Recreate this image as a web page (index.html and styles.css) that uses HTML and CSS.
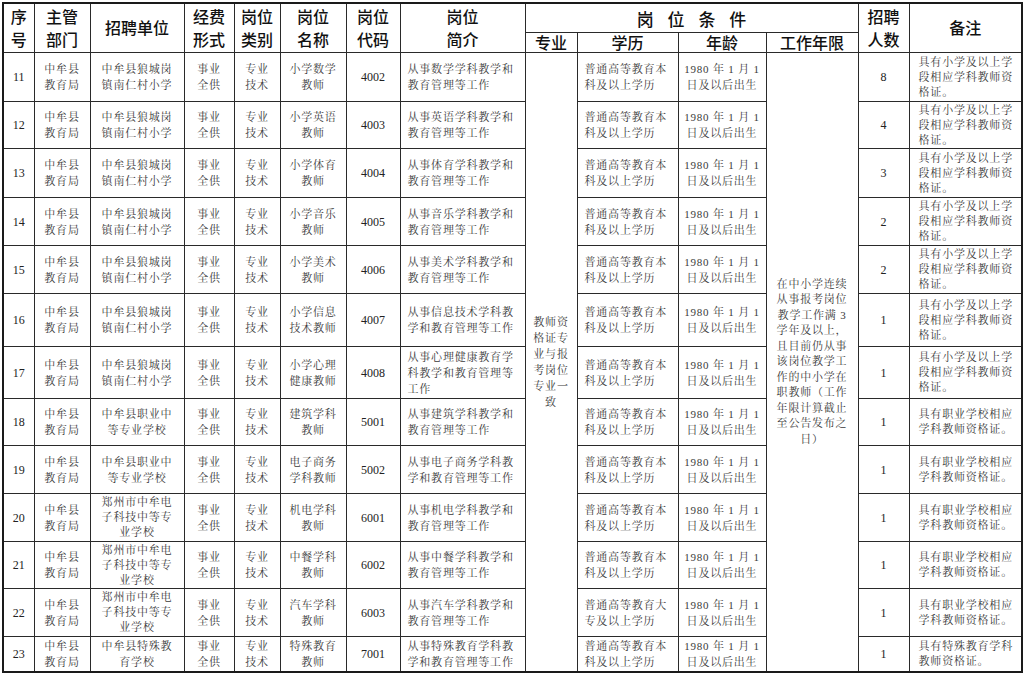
FILE: index.html
```html
<!DOCTYPE html>
<html lang="zh-CN">
<head>
<meta charset="utf-8">
<title>招聘岗位表</title>
<link rel="stylesheet" href="styles.css">
</head>
<body>
<div class="page">
<table class="jobs">
<colgroup>
<col class="c-no"><col class="c-dept"><col class="c-unit"><col class="c-fund"><col class="c-type"><col class="c-name"><col class="c-code"><col class="c-desc"><col class="c-major"><col class="c-edu"><col class="c-age"><col class="c-years"><col class="c-count"><col class="c-note">
</colgroup>
<thead>
<tr class="h1">
<th rowspan="2">序<br>号</th>
<th rowspan="2">主管<br>部门</th>
<th rowspan="2">招聘单位</th>
<th rowspan="2">经费<br>形式</th>
<th rowspan="2">岗位<br>类别</th>
<th rowspan="2">岗位<br>名称</th>
<th rowspan="2">岗位<br>代码</th>
<th rowspan="2">岗位<br>简介</th>
<th colspan="4" class="cond">岗 位 条 件</th>
<th rowspan="2">招聘<br>人数</th>
<th rowspan="2">备注</th>
</tr>
<tr class="h2">
<th>专业</th>
<th>学历</th>
<th>年龄</th>
<th>工作年限</th>
</tr>
</thead>
<tbody>
<tr class="r49">
<td class="num">11</td><td>中牟县<br>教育局</td><td>中牟县狼城岗<br>镇南仁村小学</td><td>事业<br>全供</td><td>专业<br>技术</td><td>小学数学<br>教师</td><td class="num">4002</td>
<td class="left">从事数学学科教学和<br>教育管理等工作</td>
<td rowspan="13" class="major">教师资<br>格证专<br>业与报<br>考岗位<br>专业一<br>致</td>
<td class="left">普通高等教育本<br>科及以上学历</td><td>1980 年 1 月 1<br>日及以后出生</td>
<td rowspan="13" class="years">在中小学连续<br>从事报考岗位<br>教学工作满 3<br>学年及以上，<br>且目前仍从事<br>该岗位教学工<br>作的中小学在<br>职教师（工作<br>年限计算截止<br>至公告发布之<br>日）</td>
<td class="num">8</td><td class="note">具有小学及以上学<br>段相应学科教师资<br>格证。</td>
</tr>
<tr class="r47">
<td class="num">12</td><td>中牟县<br>教育局</td><td>中牟县狼城岗<br>镇南仁村小学</td><td>事业<br>全供</td><td>专业<br>技术</td><td>小学英语<br>教师</td><td class="num">4003</td>
<td class="left">从事英语学科教学和<br>教育管理等工作</td>
<td class="left">普通高等教育本<br>科及以上学历</td><td>1980 年 1 月 1<br>日及以后出生</td>
<td class="num">4</td><td class="note">具有小学及以上学<br>段相应学科教师资<br>格证。</td>
</tr>
<tr class="r49">
<td class="num">13</td><td>中牟县<br>教育局</td><td>中牟县狼城岗<br>镇南仁村小学</td><td>事业<br>全供</td><td>专业<br>技术</td><td>小学体育<br>教师</td><td class="num">4004</td>
<td class="left">从事体育学科教学和<br>教育管理等工作</td>
<td class="left">普通高等教育本<br>科及以上学历</td><td>1980 年 1 月 1<br>日及以后出生</td>
<td class="num">3</td><td class="note">具有小学及以上学<br>段相应学科教师资<br>格证。</td>
</tr>
<tr class="r48">
<td class="num">14</td><td>中牟县<br>教育局</td><td>中牟县狼城岗<br>镇南仁村小学</td><td>事业<br>全供</td><td>专业<br>技术</td><td>小学音乐<br>教师</td><td class="num">4005</td>
<td class="left">从事音乐学科教学和<br>教育管理等工作</td>
<td class="left">普通高等教育本<br>科及以上学历</td><td>1980 年 1 月 1<br>日及以后出生</td>
<td class="num">2</td><td class="note">具有小学及以上学<br>段相应学科教师资<br>格证。</td>
</tr>
<tr class="r48">
<td class="num">15</td><td>中牟县<br>教育局</td><td>中牟县狼城岗<br>镇南仁村小学</td><td>事业<br>全供</td><td>专业<br>技术</td><td>小学美术<br>教师</td><td class="num">4006</td>
<td class="left">从事美术学科教学和<br>教育管理等工作</td>
<td class="left">普通高等教育本<br>科及以上学历</td><td>1980 年 1 月 1<br>日及以后出生</td>
<td class="num">2</td><td class="note">具有小学及以上学<br>段相应学科教师资<br>格证。</td>
</tr>
<tr class="r53">
<td class="num">16</td><td>中牟县<br>教育局</td><td>中牟县狼城岗<br>镇南仁村小学</td><td>事业<br>全供</td><td>专业<br>技术</td><td>小学信息<br>技术教师</td><td class="num">4007</td>
<td class="left">从事信息技术学科教<br>学和教育管理等工作</td>
<td class="left">普通高等教育本<br>科及以上学历</td><td>1980 年 1 月 1<br>日及以后出生</td>
<td class="num">1</td><td class="note">具有小学及以上学<br>段相应学科教师资<br>格证。</td>
</tr>
<tr class="r52">
<td class="num">17</td><td>中牟县<br>教育局</td><td>中牟县狼城岗<br>镇南仁村小学</td><td>事业<br>全供</td><td>专业<br>技术</td><td>小学心理<br>健康教师</td><td class="num">4008</td>
<td class="left">从事心理健康教育学<br>科教学和教育管理等<br>工作</td>
<td class="left">普通高等教育本<br>科及以上学历</td><td>1980 年 1 月 1<br>日及以后出生</td>
<td class="num">1</td><td class="note">具有小学及以上学<br>段相应学科教师资<br>格证。</td>
</tr>
<tr class="r47">
<td class="num">18</td><td>中牟县<br>教育局</td><td>中牟县职业中<br>等专业学校</td><td>事业<br>全供</td><td>专业<br>技术</td><td>建筑学科<br>教师</td><td class="num">5001</td>
<td class="left">从事建筑学科教学和<br>教育管理等工作</td>
<td class="left">普通高等教育本<br>科及以上学历</td><td>1980 年 1 月 1<br>日及以后出生</td>
<td class="num">1</td><td class="note">具有职业学校相应<br>学科教师资格证。</td>
</tr>
<tr class="r48">
<td class="num">19</td><td>中牟县<br>教育局</td><td>中牟县职业中<br>等专业学校</td><td>事业<br>全供</td><td>专业<br>技术</td><td>电子商务<br>学科教师</td><td class="num">5002</td>
<td class="left">从事电子商务学科教<br>学和教育管理等工作</td>
<td class="left">普通高等教育本<br>科及以上学历</td><td>1980 年 1 月 1<br>日及以后出生</td>
<td class="num">1</td><td class="note">具有职业学校相应<br>学科教师资格证。</td>
</tr>
<tr class="r48">
<td class="num">20</td><td>中牟县<br>教育局</td><td class="tight">郑州市中牟电<br>子科技中等专<br>业学校</td><td>事业<br>全供</td><td>专业<br>技术</td><td>机电学科<br>教师</td><td class="num">6001</td>
<td class="left">从事机电学科教学和<br>教育管理等工作</td>
<td class="left">普通高等教育本<br>科及以上学历</td><td>1980 年 1 月 1<br>日及以后出生</td>
<td class="num">1</td><td class="note">具有职业学校相应<br>学科教师资格证。</td>
</tr>
<tr class="r47">
<td class="num">21</td><td>中牟县<br>教育局</td><td class="tight">郑州市中牟电<br>子科技中等专<br>业学校</td><td>事业<br>全供</td><td>专业<br>技术</td><td>中餐学科<br>教师</td><td class="num">6002</td>
<td class="left">从事中餐学科教学和<br>教育管理等工作</td>
<td class="left">普通高等教育本<br>科及以上学历</td><td>1980 年 1 月 1<br>日及以后出生</td>
<td class="num">1</td><td class="note">具有职业学校相应<br>学科教师资格证。</td>
</tr>
<tr class="r48">
<td class="num">22</td><td>中牟县<br>教育局</td><td class="tight">郑州市中牟电<br>子科技中等专<br>业学校</td><td>事业<br>全供</td><td>专业<br>技术</td><td>汽车学科<br>教师</td><td class="num">6003</td>
<td class="left">从事汽车学科教学和<br>教育管理等工作</td>
<td class="left">普通高等教育大<br>专及以上学历</td><td>1980 年 1 月 1<br>日及以后出生</td>
<td class="num">1</td><td class="note">具有职业学校相应<br>学科教师资格证。</td>
</tr>
<tr class="r35">
<td class="num">23</td><td>中牟县<br>教育局</td><td>中牟县特殊教<br>育学校</td><td>事业<br>全供</td><td>专业<br>技术</td><td>特殊教育<br>教师</td><td class="num">7001</td>
<td class="left">从事特殊教育学科教<br>学和教育管理等工作</td>
<td class="left">普通高等教育本<br>科及以上学历</td><td>1980 年 1 月 1<br>日及以后出生</td>
<td class="num">1</td><td class="note">具有特殊教育学科<br>教师资格证。</td>
</tr>
</tbody>
</table>
</div>
</body>
</html>
```

FILE: styles.css
```css
html, body {
  margin: 0;
  padding: 0;
  background: #ffffff;
}

.page {
  padding: 2px 0 0 2px;
}

.jobs {
  border-collapse: collapse;
  table-layout: fixed;
  width: 1019px;
  border: 2px solid #1a1a1a;
  font-family: "Liberation Serif", "Noto Serif CJK SC", "Noto Sans CJK SC", serif;
  color: #3a3a3a;
}

.c-no { width: 31px; }
.c-dept { width: 56px; }
.c-unit { width: 94px; }
.c-fund { width: 50px; }
.c-type { width: 46px; }
.c-name { width: 66px; }
.c-code { width: 54px; }
.c-desc { width: 125px; }
.c-major { width: 52px; }
.c-edu { width: 101px; }
.c-age { width: 88px; }
.c-years { width: 92px; }
.c-count { width: 51px; }
.c-note { width: 113px; }

.jobs th {
  border: 1px solid #2a2a2a;
  font-family: "Noto Sans CJK SC", sans-serif;
  font-weight: 500;
  font-size: 16px;
  line-height: 23.5px;
  color: #111;
  padding: 0;
  text-align: center;
  vertical-align: middle;
}

.jobs .h1 th { height: 28px; }
.jobs .h2 th { height: 19px; line-height: 19px; }
.jobs th.cond { font-size: 17px; letter-spacing: 5px; padding-left: 5px; line-height: 25px; }

.jobs td {
  border: 1px solid #2a2a2a;
  font-size: 11px;
  letter-spacing: 0.8px;
  line-height: 16px;
  padding: 0;
  text-align: center;
  vertical-align: middle;
  white-space: nowrap;
}

.jobs td.num {
  font-size: 12px;
  letter-spacing: 0;
  color: #222;
}

.jobs td.left {
  text-align: left;
  padding-left: 7px;
}

.jobs td.note {
  text-align: left;
  padding-left: 9px;
  line-height: 15px;
}

.jobs td.tight { line-height: 15px; }

.jobs td.years { line-height: 15.5px; }

.r49 td { height: 48px; }
.r47 td { height: 46px; }
.r48 td { height: 47px; }
.r53 td { height: 52px; }
.r52 td { height: 51px; }
.r35 td { height: 34px; }
```
